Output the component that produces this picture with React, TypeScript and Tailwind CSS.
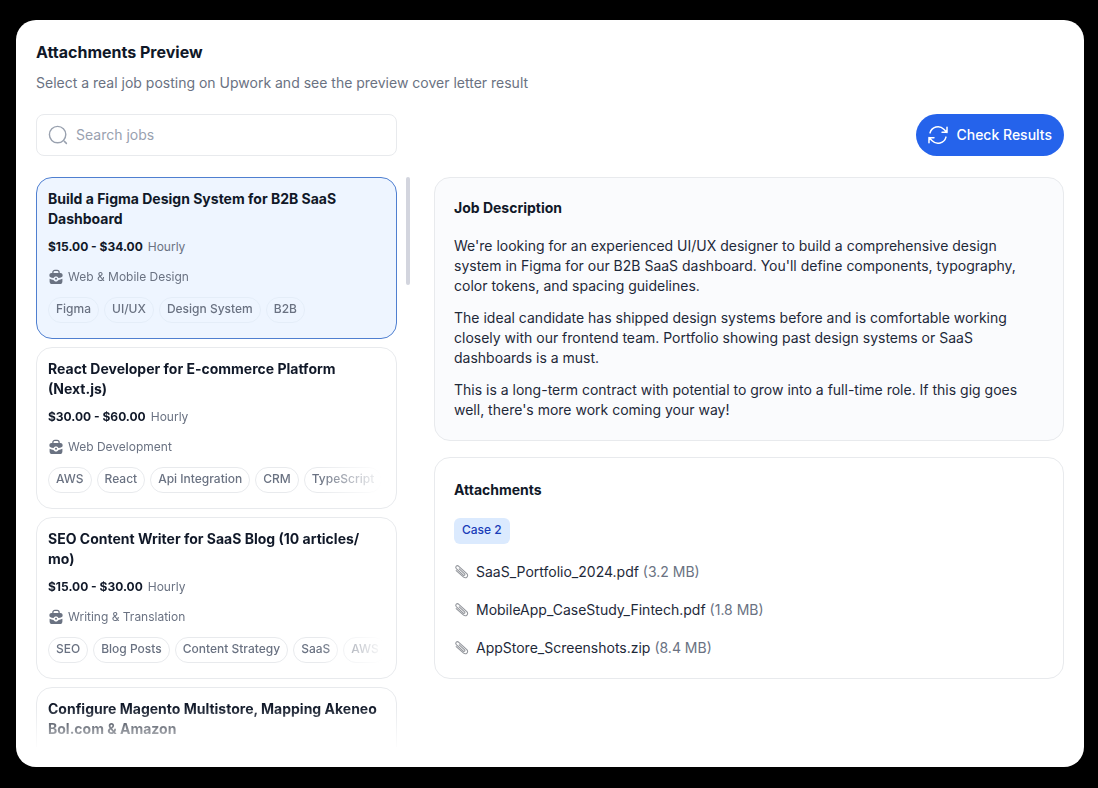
import { Fragment, useState } from "react";
import { HiOutlineArrowPath } from "react-icons/hi2";

interface Job {
  id: number;
  title: string;
  rate: string;
  type: string;
  category: string;
  tags: string[];
}

interface Attachment {
  name: string;
  size: string;
}

const JOBS: Job[] = [
  {
    id: 1,
    title: "Build a Figma Design System for B2B SaaS Dashboard",
    rate: "$15.00 - $34.00",
    type: "Hourly",
    category: "Web & Mobile Design",
    tags: ["Figma", "UI/UX", "Design System", "B2B"],
  },
  {
    id: 2,
    title: "React Developer for E-commerce Platform (Next.js)",
    rate: "$30.00 - $60.00",
    type: "Hourly",
    category: "Web Development",
    tags: ["AWS", "React", "Api Integration", "CRM", "TypeScript"],
  },
  {
    id: 3,
    title: "SEO Content Writer for SaaS Blog (10 articles/mo)",
    rate: "$15.00 - $30.00",
    type: "Hourly",
    category: "Writing & Translation",
    tags: ["SEO", "Blog Posts", "Content Strategy", "SaaS", "AWS"],
  },
  {
    id: 4,
    title: "Configure Magento Multistore, Mapping Akeneo Bol.com & Amazon",
    rate: "",
    type: "",
    category: "",
    tags: [],
  },
];

const DESCRIPTION = [
  "We're looking for an experienced UI/UX designer to build a comprehensive design system in Figma for our B2B SaaS dashboard. You'll define components, typography, color tokens, and spacing guidelines.",
  "The ideal candidate has shipped design systems before and is comfortable working closely with our frontend team. Portfolio showing past design systems or SaaS dashboards is a must.",
  "This is a long-term contract with potential to grow into a full-time role. If this gig goes well, there's more work coming your way!",
];

const ATTACHMENTS: Attachment[] = [
  { name: "SaaS_Portfolio_2024.pdf", size: "3.2 MB" },
  { name: "MobileApp_CaseStudy_Fintech.pdf", size: "1.8 MB" },
  { name: "AppStore_Screenshots.zip", size: "8.4 MB" },
];

function SearchIcon() {
  return (
    <svg viewBox="0 0 20 20" fill="none" className="size-5 shrink-0 text-gray-400" aria-hidden="true">
      <circle cx="9.6" cy="9.6" r="8.2" stroke="currentColor" strokeWidth="1.4" />
      <path d="M16.4 16.4L18.4 18.4" stroke="currentColor" strokeWidth="1.5" strokeLinecap="round" />
    </svg>
  );
}

function BriefcaseIcon() {
  return (
    <svg viewBox="0 0 16 16" fill="currentColor" className="size-4 shrink-0" aria-hidden="true">
      <path
        d="M4.9 4.4V3.3c0-1.2.9-2 2-2h2.2c1.1 0 2 .8 2 2v1.1"
        fill="none"
        stroke="currentColor"
        strokeWidth="1.3"
      />
      <path d="M3.6 4h8.8c1.3 0 2.2.9 2.2 2.1v.7c0 .5-.3.9-.7 1.1-1.1.6-2.3 1-3.5 1.2-.2-1-1.1-1.7-2.4-1.7s-2.2.7-2.4 1.7C4.4 8.9 3.2 8.5 2.1 7.9c-.4-.2-.7-.6-.7-1.1v-.7C1.4 4.9 2.3 4 3.6 4Z" />
      <path d="M1.6 9.7c1.3.6 2.6 1 3.9 1.2.5.9 1.3 1.5 2.5 1.5s2-.6 2.5-1.5c1.3-.2 2.6-.6 3.9-1.2v2.7c0 1.6-1 2.6-2.5 2.6H4.1c-1.5 0-2.5-1-2.5-2.6Z" />
      <circle cx="8" cy="9.7" r="1" />
    </svg>
  );
}

function PaperclipIcon() {
  return (
    <svg viewBox="0 0 16 16" fill="none" className="size-4 shrink-0" aria-hidden="true">
      <path
        d="M5.2 4.8l5.4 5.1c.9 1-.4 2.1-1.3 1.2L2.3 4.7C.7 2.800 3 .7 4.800 2.300l8 7.300c2.400 2.500-.9 5.600-3.500 3.200L2.200 6.700"
        stroke="#94979d"
        strokeWidth="1.100"
        strokeLinecap="round"
      />
    </svg>
  );
}

// Lets a long title wrap after a slash
function breakable(text: string) {
  return text.split("/").map((part, i) => (
    <Fragment key={i}>
      {i > 0 && (
        <>
          /<wbr />
        </>
      )}
      {part}
    </Fragment>
  ));
}

function JobCard({ job, selected, onSelect }: { job: Job; selected: boolean; onSelect: () => void }) {
  return (
    <button
      type="button"
      onClick={onSelect}
      aria-pressed={selected}
      className={`flex h-[162px] w-full shrink-0 flex-col rounded-2xl border px-[11px] pt-[11px] pb-3 text-left ${
        selected ? "border-[#4f7fd0] bg-[#eef5ff]" : "border-[#e8eaed] bg-white"
      }`}
    >
      <span className="text-sm leading-5 font-bold text-gray-900">{breakable(job.title)}</span>
      {job.rate && (
        <>
          <span className="mt-2 flex items-center gap-[5px] text-xs leading-5 text-gray-500">
            <span className="font-bold text-gray-900">{job.rate}</span>
            {job.type}
          </span>
          <span className="mt-2 flex items-center gap-1 text-xs leading-6 text-gray-500">
            <BriefcaseIcon />
            {job.category}
          </span>
          <span className="mt-2 flex w-full gap-[5px] overflow-hidden mask-r-from-[270px] mask-r-to-[335px]">
            {job.tags.map((tag) => (
              <span
                key={tag}
                className={`shrink-0 rounded-full border px-[7px] pb-0.5 text-xs leading-[22px] font-medium text-gray-500 ${
                  selected ? "border-[#e4edf8]" : "border-[#e8eaed]"
                }`}
              >
                {tag}
              </span>
            ))}
          </span>
        </>
      )}
    </button>
  );
}

export default function App() {
  const [selectedId, setSelectedId] = useState(1);
  const [query, setQuery] = useState("");

  const jobs = JOBS.filter((job) => job.title.toLowerCase().includes(query.toLowerCase()));

  return (
    <div className="min-h-screen bg-black pt-5 pr-3.5 pb-[21px] pl-4 font-['Inter',sans-serif]">
      <main className="rounded-[20px] bg-white p-5">
        <h1 className="text-base leading-6 font-bold text-gray-900">Attachments Preview</h1>
        <p className="mt-[9px] text-sm leading-5 text-gray-500">
          Select a real job posting on Upwork and see the preview cover letter result
        </p>

        <div className="mt-[21px] flex items-center justify-between">
          <label className="flex h-[42px] w-[361px] items-center gap-2 rounded-lg border border-[#e8eaed] px-[11px]">
            <SearchIcon />
            <input
              type="text"
              value={query}
              onChange={(e) => setQuery(e.target.value)}
              placeholder="Search jobs"
              aria-label="Search jobs"
              className="min-w-0 flex-1 text-sm text-gray-900 outline-none placeholder:text-gray-400"
            />
          </label>
          <button
            type="button"
            className="flex h-[42px] items-center gap-1.5 rounded-full bg-[#2563eb] pr-3 pl-2.5 text-sm font-medium text-white hover:bg-blue-700"
          >
            <HiOutlineArrowPath className="size-6" />
            Check Results
          </button>
        </div>

        <div className="mt-[21px] grid grid-cols-[374px_1fr] gap-6">
          <div className="flex items-start justify-between">
            <div className="flex h-[570px] w-[361px] flex-col gap-2 overflow-hidden mask-b-from-[530px] mask-b-to-[575px]">
              {jobs.map((job) => (
                <JobCard
                  key={job.id}
                  job={job}
                  selected={job.id === selectedId}
                  onSelect={() => setSelectedId(job.id)}
                />
              ))}
            </div>
            <div className="h-[108px] w-1 rounded-full bg-[#d3d5de]" />
          </div>

          <div className="flex flex-col gap-4">
            <section className="rounded-2xl border border-[#e8eaed] bg-[#fafbfd] px-[19px] py-5">
              <h2 className="text-sm leading-5 font-bold text-gray-900">Job Description</h2>
              <div className="mt-[18px] flex flex-col gap-3 text-sm leading-5 text-gray-800">
                {DESCRIPTION.map((text) => (
                  <p key={text}>{text}</p>
                ))}
              </div>
            </section>

            <section className="rounded-2xl border border-[#e8eaed] px-[19px] pt-[22px] pb-5">
              <h2 className="text-sm leading-5 font-bold text-gray-900">Attachments</h2>
              <span className="mt-[18px] inline-block rounded-md bg-blue-100 px-2 pb-0.5 text-xs leading-6 font-medium text-blue-800">
                Case 2
              </span>
              <ul className="mt-[18px] flex flex-col gap-[18px]">
                {ATTACHMENTS.map((file) => (
                  <li key={file.name} className="flex items-center gap-1.5 text-sm leading-5 text-gray-800">
                    <PaperclipIcon />
                    <span>
                      {file.name} <span className="text-gray-500">({file.size})</span>
                    </span>
                  </li>
                ))}
              </ul>
            </section>
          </div>
        </div>
      </main>
    </div>
  );
}
